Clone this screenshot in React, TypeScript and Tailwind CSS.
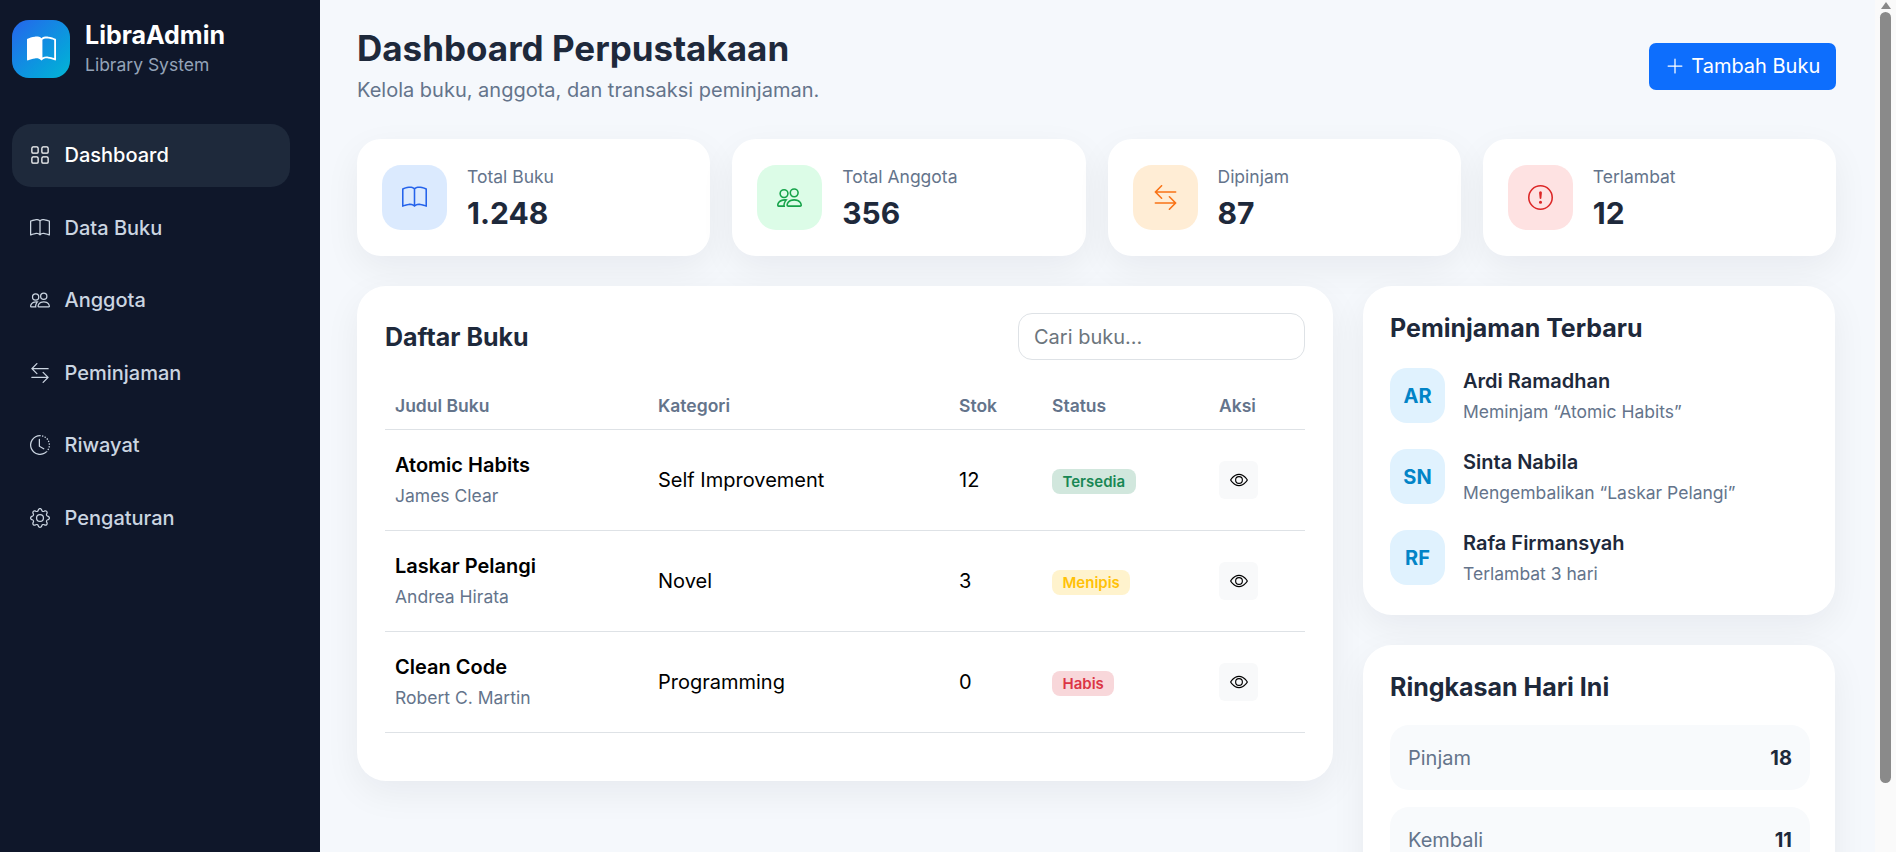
import React from 'react'
import { BsBook, BsBookHalf, BsGrid, BsPeople, BsArrowLeftRight, BsClockHistory, BsGear, BsExclamationCircle, BsEye, BsPlusLg } from 'react-icons/bs'

const navItems = [
  { label: 'Dashboard', icon: BsGrid, active: true },
  { label: 'Data Buku', icon: BsBook },
  { label: 'Anggota', icon: BsPeople },
  { label: 'Peminjaman', icon: BsArrowLeftRight },
  { label: 'Riwayat', icon: BsClockHistory },
  { label: 'Pengaturan', icon: BsGear },
]

const stats = [
  { label: 'Total Buku', value: '1.248', icon: BsBook, tile: 'bg-[#dbeafe] text-[#2563eb]' },
  { label: 'Total Anggota', value: '356', icon: BsPeople, tile: 'bg-[#dcfce7] text-[#16a34a]' },
  { label: 'Dipinjam', value: '87', icon: BsArrowLeftRight, tile: 'bg-[#ffedd5] text-[#f97316]' },
  { label: 'Terlambat', value: '12', icon: BsExclamationCircle, tile: 'bg-[#fee2e2] text-[#dc2626]' },
]

const books = [
  { title: 'Atomic Habits', author: 'James Clear', category: 'Self Improvement', stock: 12, status: 'Tersedia', badge: 'bg-[#d1e7dd] text-[#198754]' },
  { title: 'Laskar Pelangi', author: 'Andrea Hirata', category: 'Novel', stock: 3, status: 'Menipis', badge: 'bg-[#fff3cd] text-[#ffc107]' },
  { title: 'Clean Code', author: 'Robert C. Martin', category: 'Programming', stock: 0, status: 'Habis', badge: 'bg-[#f8d7da] text-[#dc3545]' },
]

const loans = [
  { initials: 'AR', name: 'Ardi Ramadhan', note: 'Meminjam “Atomic Habits”' },
  { initials: 'SN', name: 'Sinta Nabila', note: 'Mengembalikan “Laskar Pelangi”' },
  { initials: 'RF', name: 'Rafa Firmansyah', note: 'Terlambat 3 hari' },
]

const cardShadow = 'shadow-[0_12px_36px_rgba(15,23,42,0.06)]'

export default function App() {
  return (
    <div className="flex min-h-screen bg-[#f5f8fc] font-['Inter',sans-serif] text-[20px] text-[#212529]">
      <aside className="sticky top-0 flex h-screen w-[320px] shrink-0 flex-col bg-[#0f172a] px-3 pt-5">
        <div className="flex items-center gap-[15px]">
          <div className="flex h-[58px] w-[58px] items-center justify-center rounded-[17px] bg-gradient-to-br from-[#2563eb] to-[#06b6d4] text-white">
            <BsBookHalf size={29} />
          </div>
          <div>
            <div className="text-[25px] leading-[29px] font-bold text-white">LibraAdmin</div>
            <div className="mt-[3px] text-[17.5px] leading-[24px] text-[#94a3b8]">Library System</div>
          </div>
        </div>
        <nav className="mt-[46px] flex w-[278px] flex-col gap-[9.6px]">
          {navItems.map((item) => (
            <a
              key={item.label}
              className={`flex h-[63px] items-center gap-[15px] rounded-[19px] px-[17.5px] pb-[1px] font-medium ${
                item.active ? 'bg-[#1e293b] text-white' : 'text-[#cbd5e1]'
              }`}
            >
              <item.icon size={20} />
              {item.label}
            </a>
          ))}
        </nav>
      </aside>

      <main className="min-w-0 flex-1 pt-[24px] pr-[60px] pb-[18px] pl-[37px]">
        <header className="flex items-center justify-between">
          <div>
            <h1 className="text-[35px] leading-[48px] font-bold text-[#1e293b]">Dashboard Perpustakaan</h1>
            <p className="mt-[4px] leading-[29px] text-[#64748b]">Kelola buku, anggota, dan transaksi peminjaman.</p>
          </div>
          <button className="mt-[3px] flex h-[47px] w-[187px] items-center justify-center gap-[6.5px] rounded-[7px] bg-[#0d6efd] text-white">
            <BsPlusLg size={20} />
            Tambah Buku
          </button>
        </header>

        <section className="mt-[34px] grid grid-cols-4 gap-[22px]">
          {stats.map((s) => (
            <div key={s.label} className={`flex h-[117px] items-center gap-[20px] rounded-[24px] bg-white px-[25px] ${cardShadow}`}>
              <div className={`flex h-[65px] w-[65px] items-center justify-center rounded-[19px] ${s.tile}`}>
                <s.icon size={25} />
              </div>
              <div>
                <div className="text-[17.5px] leading-[25px] text-[#64748b]">{s.label}</div>
                <div className="mt-[6px] text-[30px] leading-[36px] font-bold text-[#1e293b]">{s.value}</div>
              </div>
            </div>
          ))}
        </section>

        <section className="mt-[30px] flex items-start gap-[30px]">
          <div className={`h-[495px] w-[976px] shrink-0 rounded-[29px] bg-white px-[28px] pt-[27px] ${cardShadow}`}>
            <div className="flex items-center justify-between">
              <h2 className="pt-[2px] text-[25px] font-bold text-[#1e293b]">Daftar Buku</h2>
              <input
                placeholder="Cari buku..."
                className="h-[47px] w-[287px] rounded-[14px] border border-[#dee2e6] px-[15px] placeholder:text-[#6c757d]"
              />
            </div>
            <table className="mt-[21px] w-full table-fixed border-collapse text-left">
              <thead>
                <tr className="border-b border-[#dee2e6] text-[17.5px] text-[#64748b]">
                  <th className="h-[48px] w-[263px] px-[10px] pt-[3px] font-semibold">Judul Buku</th>
                  <th className="w-[301px] px-[10px] pt-[3px] font-semibold">Kategori</th>
                  <th className="w-[93px] px-[10px] pt-[3px] font-semibold">Stok</th>
                  <th className="w-[167px] px-[10px] pt-[3px] font-semibold">Status</th>
                  <th className="px-[10px] pt-[3px] font-semibold">Aksi</th>
                </tr>
              </thead>
              <tbody>
                {books.map((b) => (
                  <tr key={b.title} className="h-[101px] border-b border-[#dee2e6] text-black">
                    <td className="px-[10px]">
                      <div className="leading-[28px] font-semibold">{b.title}</div>
                      <div className="mt-[4px] text-[17.5px] leading-[25px] text-[#64748b]">{b.author}</div>
                    </td>
                    <td className="px-[10px]">{b.category}</td>
                    <td className="px-[10px]">{b.stock}</td>
                    <td className="px-[10px]">
                      <span className={`inline-block rounded-[8px] px-[10.5px] text-[15px] leading-[25px] font-semibold ${b.badge}`}>{b.status}</span>
                    </td>
                    <td className="px-[10px]">
                      <button className="flex h-[38px] w-[39px] items-center justify-center rounded-[6px] bg-[#f8f9fa]">
                        <BsEye size={18} />
                      </button>
                    </td>
                  </tr>
                ))}
              </tbody>
            </table>
          </div>

          <div className="mr-[1px] flex min-w-0 flex-1 flex-col gap-[30px]">
            <div className={`rounded-[29px] bg-white pt-[28px] pr-[25px] pb-[30px] pl-[27px] ${cardShadow}`}>
              <h3 className="text-[25px] leading-[29px] font-bold text-[#1e293b]">Peminjaman Terbaru</h3>
              <div className="mt-[25px] flex flex-col gap-[26px]">
                {loans.map((l) => (
                  <div key={l.initials} className="flex h-[55px] items-center gap-[18px]">
                    <div className="flex h-[55px] w-[55px] items-center justify-center rounded-[17px] bg-[#e0f2fe] font-bold text-[#0284c7]">
                      {l.initials}
                    </div>
                    <div>
                      <div className="leading-[28px] font-semibold text-[#1e293b]">{l.name}</div>
                      <div className="mt-[4px] text-[17.5px] leading-[25px] text-[#64748b]">{l.note}</div>
                    </div>
                  </div>
                ))}
              </div>
            </div>

            <div className={`rounded-[29px] bg-white pt-[28px] pr-[25px] pb-[27px] pl-[27px] ${cardShadow}`}>
              <h3 className="text-[25px] leading-[29px] font-bold text-[#1e293b]">Ringkasan Hari Ini</h3>
              <div className="mt-[23px] flex flex-col gap-[17px]">
                <div className="flex h-[65px] items-center justify-between rounded-[19px] bg-[#f8fafc] px-[18px]">
                  <span className="text-[#64748b]">Pinjam</span>
                  <span className="font-bold text-[#1e293b]">18</span>
                </div>
                <div className="flex h-[65px] items-center justify-between rounded-[19px] bg-[#f8fafc] px-[18px]">
                  <span className="text-[#64748b]">Kembali</span>
                  <span className="font-bold text-[#1e293b]">11</span>
                </div>
              </div>
            </div>
          </div>
        </section>
      </main>

      {/* browser scrollbar, headless run does not paint one */}
      <div className="fixed top-0 right-0 bottom-0 flex w-[21px] flex-col items-center bg-[#fafafa]">
        <svg width="10" height="7" viewBox="0 0 10 7" className="mt-[2px] fill-[#8a8a8a]"><path d="M5 0l5 7H0z" /></svg>
        <div className="mt-[3px] h-[771px] w-[11px] rounded-full bg-[#8a8a8a]" />
      </div>
    </div>
  )
}
